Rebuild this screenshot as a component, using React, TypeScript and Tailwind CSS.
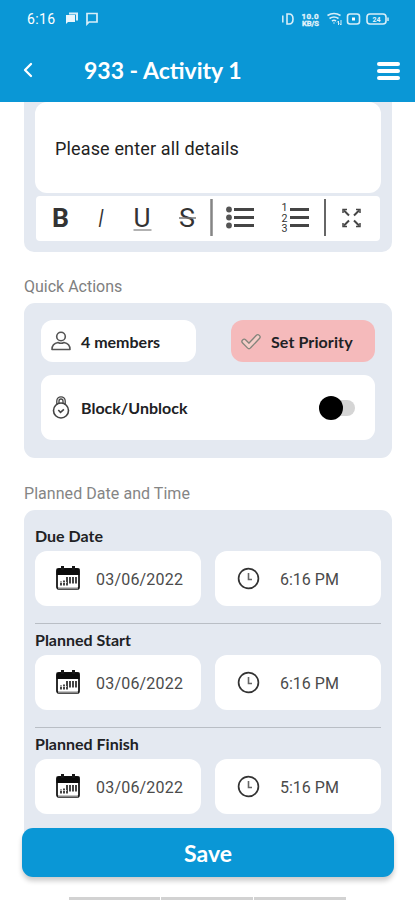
import React from "react";

const lato = "font-['Lato','Liberation_Sans',sans-serif]";
const roboto = "font-['Roboto','Liberation_Sans',sans-serif]";

function StatusBar() {
  return (
    <div className="flex h-[38px] items-center pl-[27px] pr-[26px]">
      <span className={`${roboto} w-[38px] text-[14px] leading-none tracking-[0.4px]`}>6:16</span>
      <svg width="36" height="14" viewBox="0 0 36 14" fill="none" stroke="#d9eef8">
        <path d="M4 1.500h8v7" strokeWidth="2" />
        <path d="M1 3h9v7H3l-2 2z" fill="#e9f6fc" stroke="none" />
        <path d="M22 1.500h10v8.500H24l-2 2z" strokeWidth="1.700" />
      </svg>
      <div className="flex-1" />
      <svg width="108" height="16" viewBox="281 11 108 16" fill="none" stroke="#d9eef8" strokeWidth="1.600">
        <path d="M282.800 15.500v7" strokeWidth="1.500" />
        <path d="M287 14h2q4 0 4 5t-4 5h-2z" />
        <text x="301.500" y="18.500" fill="#e4f4fb" stroke="#e4f4fb" strokeWidth=".3" fontFamily="Roboto" fontWeight="700" fontSize="8" textLength="17">10.0</text>
        <text x="302" y="25.500" fill="#e4f4fb" stroke="#e4f4fb" strokeWidth=".3" fontFamily="Roboto" fontWeight="700" fontSize="7" textLength="17" lengthAdjust="spacingAndGlyphs">KB/S</text>
        <path d="M327.500 15.500q6.500-4 13 0M329.500 18.500q4.500-3 9 0M332 21q2-1.500 4 0M334 22.500v1" />
        <path d="M338.500 25v-4m-1.500 1.500 1.500-1.500M341 20v5m-1.300-1.500 1.300 1.500" strokeWidth="1" />
        <rect x="347.500" y="14" width="12" height="10" rx="2.500" />
        <rect x="352" y="17.500" width="3" height="3" fill="#fff" stroke="none" />
        <rect x="367" y="14" width="19" height="10" rx="3" />
        <path d="M388 17.500v3.500" strokeWidth="1.500" />
        <text x="372.500" y="21.500" fill="#e4f4fb" stroke="none" fontFamily="Roboto" fontWeight="700" fontSize="7">24</text>
      </svg>
    </div>
  );
}

function Header() {
  return (
    <header className="h-[101.5px] shrink-0 bg-[#0a97d6] text-white">
      <StatusBar />
      <div className="flex h-[64px] items-center pl-[22px] pr-[15px]">
        <svg width="14" height="18" viewBox="0 0 14 18" fill="none" stroke="#fff" strokeWidth="2.300" strokeLinecap="round" strokeLinejoin="round">
          <path d="M9 3 3 9l6 6" />
        </svg>
        <h1 className={`${lato} ml-12 flex-1 whitespace-nowrap pt-px text-[23px] font-bold leading-none`}>933 - Activity 1</h1>
        <div className="flex w-[23px] flex-col gap-[3px] pt-px">
          <span className="h-1 rounded-sm bg-white" />
          <span className="h-1 rounded-sm bg-white" />
          <span className="h-1 rounded-sm bg-white" />
        </div>
      </div>
    </header>
  );
}

function Toolbar() {
  return (
    <div className="mx-[1px] mt-[3px] h-[45px] rounded bg-white">
      <svg width="344" height="45" viewBox="36 196 344 45" fill="none" stroke="#454545" className="block">
        <g fontFamily="Roboto, sans-serif" fill="#333" stroke="none">
          <text x="52" y="227" fontSize="26" fontWeight="700" textLength="17" lengthAdjust="spacingAndGlyphs">B</text>
          <text x="97.500" y="227" fontSize="26" fontStyle="italic" fontWeight="300">I</text>
          <text x="133.500" y="227" fontSize="26" textLength="17" lengthAdjust="spacingAndGlyphs">U</text>
          <text x="179" y="227" fontSize="26" textLength="16" lengthAdjust="spacingAndGlyphs">S</text>
          <g fontSize="10">
            <text x="281.500" y="211" textLength="6" lengthAdjust="spacingAndGlyphs">1</text>
            <text x="281.500" y="221.500" textLength="6" lengthAdjust="spacingAndGlyphs">2</text>
            <text x="281.500" y="232" textLength="6" lengthAdjust="spacingAndGlyphs">3</text>
          </g>
        </g>
        <path d="M133.500 230h18" stroke="#999" strokeWidth="1.500" />
        <path d="M179 218h17" stroke="#777" strokeWidth="1.500" />
        <path d="M211.500 199v37" stroke="#858585" strokeWidth="2.500" />
        <path d="M325 199v37" stroke="#666" strokeWidth="2" />
        <path d="M234 209.500h20M234 217.500h20M234 225.500h20M290 209.500h19M290 217.500h19M290 225.500h19" strokeWidth="3" />
        <g fill="#555" stroke="none">
          <circle cx="229" cy="209.500" r="2.900" />
          <circle cx="229" cy="217.500" r="2.900" />
          <circle cx="229" cy="225.500" r="2.900" />
        </g>
        <path d="m349 215.500-5-5M354 215.500l5-5M349 220.500l-5 5M354 220.500l5 5" strokeWidth="2" />
        <path d="M343 213v-3.500h4M356 209.500h4v3.500M343 223v3.500h4M356 226.500h4V223" strokeWidth="1.500" />
      </svg>
    </div>
  );
}

function PersonIcon() {
  return (
    <svg width="20" height="20" viewBox="0 0 20 20" fill="none" stroke="#555" strokeWidth="1.600">
      <circle cx="10" cy="5.500" r="4.300" />
      <path d="M7 11.500Q1 12.500 1 18.500h18q0-6-6-7-3 1.500-6 0Z" strokeLinejoin="round" />
    </svg>
  );
}

function LockIcon() {
  return (
    <svg width="20" height="24" viewBox="0 0 20 24" fill="none" stroke="#444" strokeWidth="1.600">
      <circle cx="10" cy="14.500" r="7.500" />
      <path d="M5.800 8.500V5a4.200 4.200 0 0 1 8.400 0v3.500M8 7V5a2 2 0 0 1 4 0v2" strokeWidth="1.300" />
      <path d="m7.300 14 2.200 2.300 3.400-3" />
    </svg>
  );
}

function CheckIcon() {
  return (
    <svg width="20" height="17" viewBox="0 0 20 17" strokeLinecap="round" strokeLinejoin="round" fill="none">
      <path d="m3.200 8.500 4.800 4.800 8.800-9.300" stroke="#85857c" strokeWidth="5.800" />
      <path d="m3.200 8.500 4.800 4.800 8.800-9.300" stroke="#f6cdc8" strokeWidth="3.100" />
    </svg>
  );
}

function CalendarIcon() {
  return (
    <svg width="24" height="25" viewBox="0 0 24 25" fill="none" stroke="#171717">
      <rect x="1" y="3" width="22" height="20" rx="2" strokeWidth="1.800" />
      <path d="M.5 2.500h23V9H.5z" fill="#0b0b0b" stroke="none" />
      <path d="M6.500 0v4M17.500 0v4" strokeWidth="3" />
      <path d="M5 19.500v-4M8 19.500v-5M11 19.500V11M14 17.500V11M17 17.500V11M20 17.500V11" strokeWidth="1.600" />
      <path d="M3 16.500h8" stroke="#fff" strokeWidth=".6" />
      <path d="M2 22.500h20" stroke="#888" strokeWidth="2" />
    </svg>
  );
}

function ClockIcon() {
  return (
    <svg width="23" height="23" viewBox="0 0 23 23" fill="none" stroke="#333">
      <circle cx="11.500" cy="11.500" r="9.900" strokeWidth="1.700" />
      <path d="M11.500 6v6.500H15" stroke="#666" strokeWidth="1.600" />
    </svg>
  );
}

function DateTime({ label, time }: { label: string; time: string }) {
  return (
    <section className="h-[88px]">
      <h3 className={`${lato} h-[25px] text-[16px] font-bold leading-[20px] text-[#202124]`}>{label}</h3>
      <div className="grid grid-cols-2 gap-[14px]">
        <div className="flex h-[55px] items-center rounded-xl bg-white pl-[21px]">
          <CalendarIcon />
          <span className={`${roboto} ml-4 whitespace-nowrap pt-0.5 text-[16px] tracking-[0.2px] text-[#4b4b4b]`}>03/06/2022</span>
        </div>
        <div className="flex h-[55px] items-center rounded-xl bg-white pl-[22px]">
          <ClockIcon />
          <span className={`${roboto} ml-5 whitespace-nowrap pt-0.5 text-[16px] text-[#4b4b4b]`}>{time}</span>
        </div>
      </div>
    </section>
  );
}

export default function App() {
  return (
    <div className="flex h-[900px] w-[415px] flex-col overflow-hidden bg-white">
      <Header />
      <main className="flex flex-col pl-6 pr-[23px]">
        <section className="h-[150px] rounded-b-[10px] bg-[#e4e9f1] px-[11px]">
          <div className={`${roboto} flex h-[91px] items-center rounded-xl bg-white pl-5 pt-0.5 text-[18px] tracking-[0.15px] text-[#222]`}>Please enter all details</div>
          <Toolbar />
        </section>

        <h2 className={`${roboto} mt-[25px] h-[26.5px] text-[16px] leading-5 text-[#808080]`}>Quick Actions</h2>
        <section className="h-[155px] rounded-[11px] bg-[#e4e9f1] px-[17px] pt-[17px]">
          <div className={`${lato} flex justify-between text-[16px] font-bold text-[#202124]`}>
            <div className="flex h-[42px] w-[155px] items-center rounded-xl bg-white pl-[10px]">
              <PersonIcon />
              <span className="ml-[10px] pt-px">4 members</span>
            </div>
            <div className="flex h-[42px] w-[144px] items-center rounded-xl bg-[#f5babb] pl-[10px]">
              <CheckIcon />
              <span className="ml-[10px] pt-px tracking-[0.1px]">Set Priority</span>
            </div>
          </div>
          <div className="mt-[13px] flex h-[65px] items-center rounded-[11px] bg-white pl-[10px] pr-[20px]">
            <LockIcon />
            <span className={`${lato} ml-[10px] flex-1 text-[16px] font-bold text-[#202124]`}>Block/Unblock</span>
            <div className="flex h-4 w-9 items-center rounded-full bg-[#d5d5d5]">
              <div className="h-6 w-6 shrink-0 rounded-full bg-black" />
            </div>
          </div>
        </section>

        <h2 className={`${roboto} mt-[26px] h-[26px] text-[16px] leading-5 tracking-[0.05px] text-[#858585]`}>Planned Date and Time</h2>
        <section className="h-[330px] rounded-t-[11px] bg-[#e4e9f1] px-[11px] pt-4">
          <DateTime label="Due Date" time="6:16 PM" />
          <div className="mb-[6px] mt-[9px] h-px bg-[#b9bec5]" />
          <DateTime label="Planned Start" time="6:16 PM" />
          <div className="mb-[6px] mt-[9px] h-px bg-[#b9bec5]" />
          <DateTime label="Planned Finish" time="5:16 PM" />
        </section>
      </main>
      <button className={`${lato} relative ml-[22px] -mt-3 h-[49px] w-[372px] shrink-0 rounded-[11px] bg-[#0a97d6] pt-0.5 text-[23px] font-bold text-white shadow-[0_4px_5px_#0003]`}>Save</button>
      <div className="ml-[69px] mt-auto flex h-[3px] w-[277px] shrink-0 gap-px">
        <span className="w-[91px] bg-[#d2d2d2]" />
        <span className="w-[92px] bg-[#d2d2d2]" />
        <span className="flex-1 bg-[#d2d2d2]" />
      </div>
    </div>
  );
}
